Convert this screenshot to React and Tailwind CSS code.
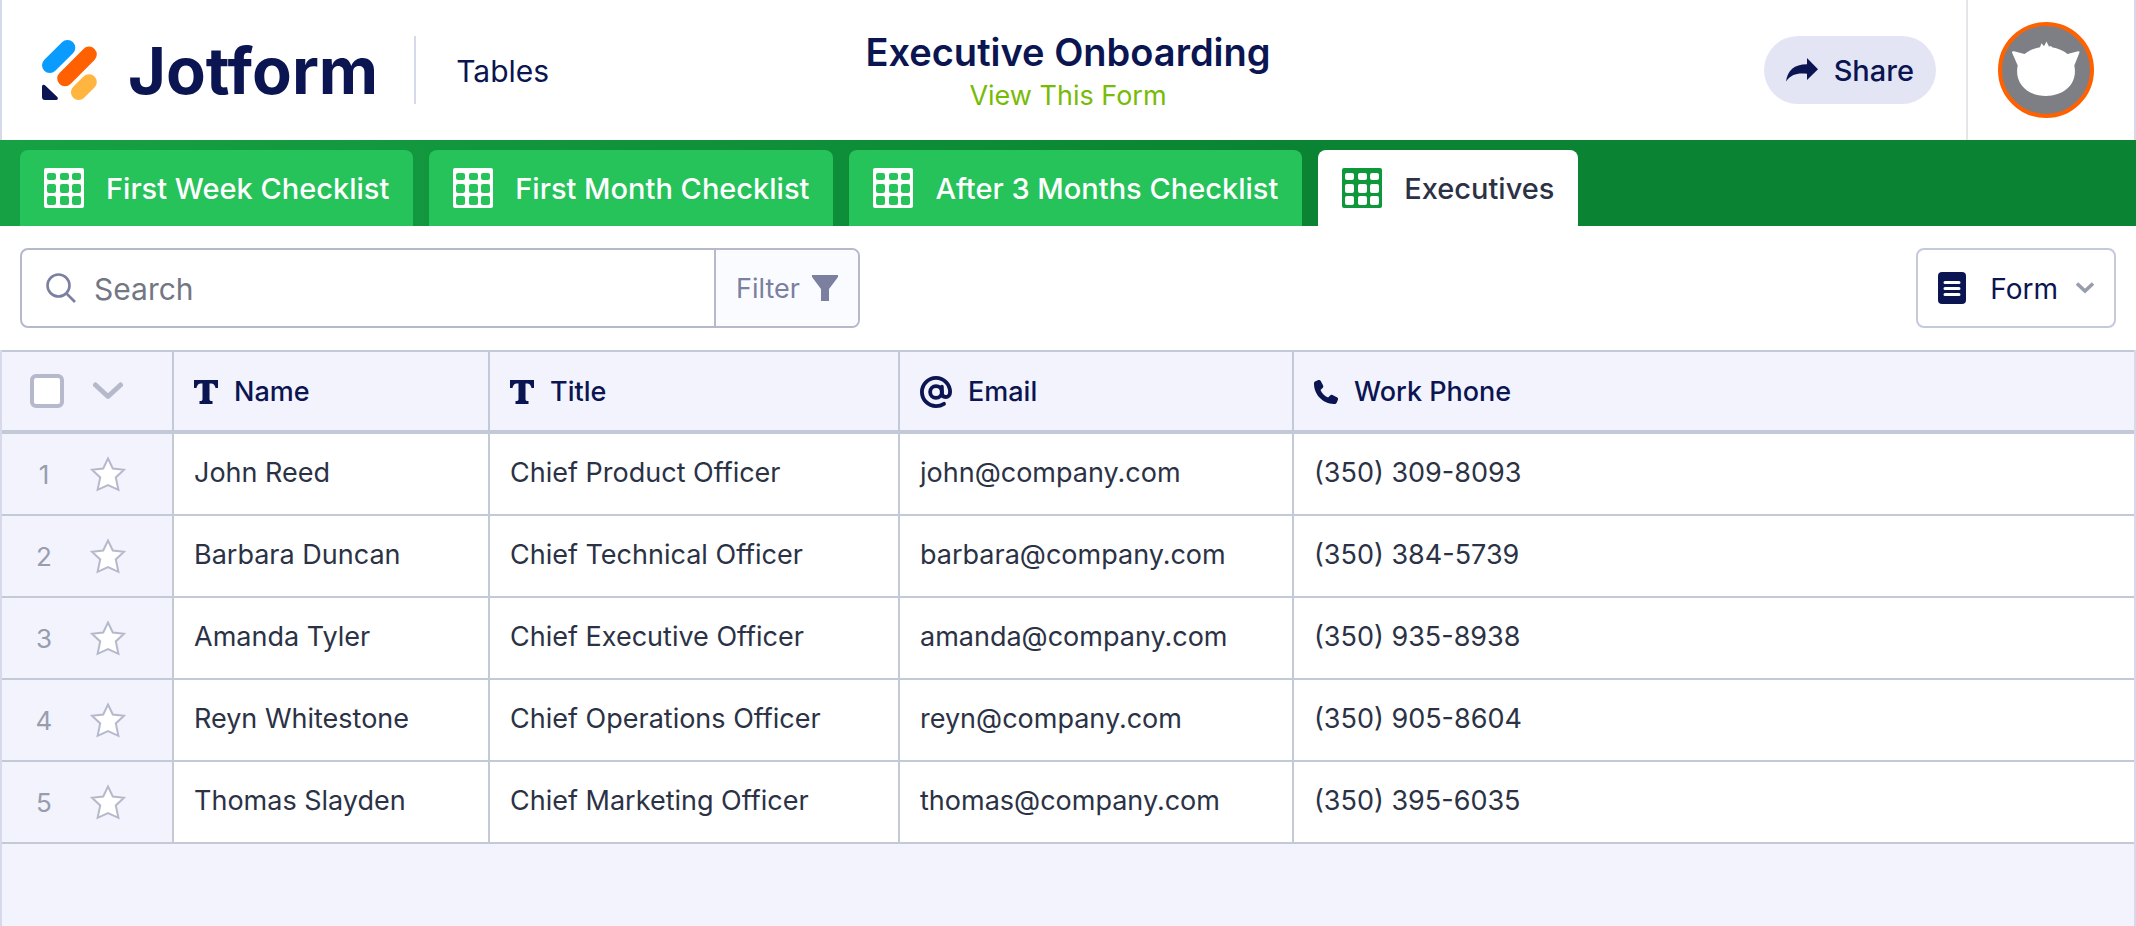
const tabs = ["First Week Checklist", "First Month Checklist", "After 3 Months Checklist", "Executives"];

const people = [
  ["John Reed", "Chief Product Officer", "john@company.com", "(350) 309-8093"],
  ["Barbara Duncan", "Chief Technical Officer", "barbara@company.com", "(350) 384-5739"],
  ["Amanda Tyler", "Chief Executive Officer", "amanda@company.com", "(350) 935-8938"],
  ["Reyn Whitestone", "Chief Operations Officer", "reyn@company.com", "(350) 905-8604"],
  ["Thomas Slayden", "Chief Marketing Officer", "thomas@company.com", "(350) 395-6035"],
];

function LogoMark() {
  return (
    <svg viewBox="0 0 56 60" className="h-15 w-14" aria-hidden="true">
      <g strokeLinecap="round" fill="none">
        <path d="M7.800 25.300 25.500 7.800" stroke="#0a9bff" strokeWidth="15.600" />
        <path d="M23 38.400 47 14.400" stroke="#ff6100" strokeWidth="15.600" />
        <path d="M36.700 52.200 47 42" stroke="#ffb53f" strokeWidth="15.600" />
      </g>
      <path d="M0 46.500c0-1.600 1.800-2.300 3-1.200L15.300 57c1.200 1.100.4 3-1.200 3H3a3 3 0 0 1-3-3z" fill="#0a1551" />
    </svg>
  );
}

function GridIcon() {
  return (
    <svg viewBox="0 0 40 40" className="size-10 shrink-0" fill="currentColor" aria-hidden="true">
      <path
        fillRule="evenodd"
        d="M2 0h36a2 2 0 0 1 2 2v36a2 2 0 0 1-2 2H2a2 2 0 0 1-2-2V2a2 2 0 0 1 2-2z
        M5 5a2 2 0 0 0-2 2v3a2 2 0 0 0 2 2h5a2 2 0 0 0 2-2V7a2 2 0 0 0-2-2z M18 5a2 2 0 0 0-2 2v3a2 2 0 0 0 2 2h5a2 2 0 0 0 2-2V7a2 2 0 0 0-2-2z M30 5a2 2 0 0 0-2 2v3a2 2 0 0 0 2 2h5a2 2 0 0 0 2-2V7a2 2 0 0 0-2-2z
        M5 16a2 2 0 0 0-2 2v5a2 2 0 0 0 2 2h5a2 2 0 0 0 2-2v-5a2 2 0 0 0-2-2z M18 16a2 2 0 0 0-2 2v5a2 2 0 0 0 2 2h5a2 2 0 0 0 2-2v-5a2 2 0 0 0-2-2z M30 16a2 2 0 0 0-2 2v5a2 2 0 0 0 2 2h5a2 2 0 0 0 2-2v-5a2 2 0 0 0-2-2z
        M5 28a2 2 0 0 0-2 2v5a2 2 0 0 0 2 2h5a2 2 0 0 0 2-2v-5a2 2 0 0 0-2-2z M18 28a2 2 0 0 0-2 2v5a2 2 0 0 0 2 2h5a2 2 0 0 0 2-2v-5a2 2 0 0 0-2-2z M30 28a2 2 0 0 0-2 2v5a2 2 0 0 0 2 2h5a2 2 0 0 0 2-2v-5a2 2 0 0 0-2-2z"
      />
    </svg>
  );
}

function ShareIcon() {
  return (
    <svg viewBox="0 0 32 24" className="h-6 w-8 shrink-0" fill="currentColor" aria-hidden="true">
      <path d="M0 23.500C1.500 12.500 8 6.300 21 6.200V0l11 11.200L21 22v-6.200c-9.500-1.200-16 .7-21 7.700z" />
    </svg>
  );
}

function TextIcon() {
  return (
    <svg viewBox="0 0 24 24" className="size-6 shrink-0" fill="currentColor" aria-hidden="true">
      <path d="M0 0h24v8h-2.500C20.700 4.700 19.500 3.500 16.500 3.500H15.500v15.500c0 1.700.8 2 3 2v3h-13v-3c2.200 0 3-.3 3-2V3.500h-1C4.500 3.500 3.300 4.700 2.500 8H0z" />
    </svg>
  );
}

function AtIcon() {
  return (
    <svg viewBox="0 0 30 30" className="size-8 shrink-0" fill="none" stroke="currentColor" strokeWidth="3.600" strokeLinecap="round" aria-hidden="true">
      <circle cx="15" cy="15" r="5.500" />
      <path d="M20.500 10v6.200c0 2.200 1.500 3.500 3.600 3.500 2.300 0 4.100-1.700 4.100-4.700A13.200 13.200 0 1 0 15 28.200c3 0 5.300-.7 7.500-2.100" />
    </svg>
  );
}

function PhoneIcon() {
  return (
    <svg viewBox="0 0 24 24" className="size-6 shrink-0" fill="currentColor" aria-hidden="true">
      <path d="M1.600 1.200 4.300.1c1-.4 2 0 2.500 1l2.300 4.500c.4.900.2 1.800-.5 2.400L6.500 9.900c1.600 3.500 4 6 7.600 7.700l2-2.200c.6-.7 1.500-.9 2.400-.5l4.400 2.300c1 .5 1.400 1.500 1 2.500l-1.100 2.700c-.4.9-1.100 1.500-2.100 1.500C9.500 24.500-.3 14.700 0 3.300c0-1 .6-1.700 1.600-2.100z" />
    </svg>
  );
}

function StarIcon() {
  return (
    <svg viewBox="0 0 36 36" className="size-9" fill="#fff" stroke="#b5b9cb" strokeWidth="2" aria-hidden="true">
      <path d="m18 2.500 4.800 10 11.200 1.300-8.200 7.600 2.600 12.500L18 29.200l-10.400 4.700 2.600-12.500L2 13.800l11.200-1.300z" />
    </svg>
  );
}

const columns = [
  { label: "Name", Icon: TextIcon, width: "w-[316px]" },
  { label: "Title", Icon: TextIcon, width: "w-[410px]" },
  { label: "Email", Icon: AtIcon, width: "w-[394px]" },
  { label: "Work Phone", Icon: PhoneIcon, width: "" },
];

function Header() {
  return (
    <header className="grid h-[140px] grid-cols-[1fr_auto_1fr] items-center border-x-2 border-[#d5d9ea] bg-white text-[#0a1551]">
      <div className="flex items-center pl-10">
        <a href="#home" className="flex items-center gap-[30px]">
          <LogoMark />
          <span className="text-[65px] leading-none font-bold">Jotform</span>
        </a>
        <div className="ml-9 h-17 w-0.5 bg-[#d5d9ea]" />
        <a href="#tables" className="ml-10 pt-0.5 text-3xl">Tables</a>
      </div>
      <div className="flex flex-col items-center pt-1">
        <h1 className="text-[38px] leading-[48px] font-semibold">Executive Onboarding</h1>
        <a href="#form" className="text-[27px] leading-10 text-[#78bb07]">View This Form</a>
      </div>
      <div className="flex h-full items-center justify-end">
        <button className="mr-[30px] flex h-17 items-center gap-4 rounded-full bg-[#e3e5f5] px-[22px] text-[29px] font-medium">
          <ShareIcon />
          <span className="pt-0.5">Share</span>
        </button>
        <div className="flex h-full items-center border-l-2 border-[#e3e5e8] px-[30px] pr-10">
          <button aria-label="Account" className="size-24 overflow-hidden rounded-full border-4 border-[#ff6100] bg-[#7e7f84]">
            <svg viewBox="0 0 88 88" className="size-full" fill="#fff" aria-hidden="true">
              <path d="M10 26.500c0-1 1-1.500 2-1.200L22.500 28C27 24.500 32 22.200 38 21.200l1.500-4 2.500 3 2.500-4.700 2.500 5 2-.5 1 1.300C56 22.300 61 24.500 65.500 28L76 25.200c1-.2 1.800.3 1.500 1.300L72.300 39.500C76 57 63 70 44 70S12 57 15.700 39.500z" />
            </svg>
          </button>
        </div>
      </div>
    </header>
  );
}

function Tabs() {
  return (
    <nav className="flex gap-4 bg-linear-to-r from-[#16a144] to-[#0a8432] to-60% px-5 pt-2.5">
      {tabs.map((tab) => (
        <button
          key={tab}
          aria-current={tab === "Executives" ? "page" : undefined}
          className="group flex h-19 items-center gap-[22px] rounded-t-lg bg-[#26c25a] px-6 text-[29px] font-medium whitespace-nowrap text-white aria-[current=page]:bg-white"
        >
          <span className="group-aria-[current=page]:text-[#0f973c]">
            <GridIcon />
          </span>
          <span className="pt-0.5 group-aria-[current=page]:text-[#2b3245]">{tab}</span>
        </button>
      ))}
    </nav>
  );
}

function Toolbar() {
  return (
    <div className="flex justify-between px-5 py-[22px]">
      <div className="flex h-20 w-[840px] overflow-hidden rounded-lg border-2 border-[#b5b9cb]">
        <label className="flex min-w-0 flex-1 items-center gap-[18px] pl-6">
          <svg viewBox="0 0 30 30" className="size-[30px] shrink-0" fill="none" stroke="#7b80a0" strokeWidth="2.600" aria-hidden="true">
            <circle cx="12.500" cy="12.500" r="11" />
            <path d="m20.500 20.500 8.500 8.500" />
          </svg>
          <input type="text" aria-label="Search" placeholder="Search" className="min-w-0 flex-1 pt-0.5 text-3xl outline-none placeholder:text-[#737784]" />
        </label>
        <button className="flex items-center gap-3 border-l-2 border-[#b5b9cb] bg-[#fafbfe] px-5 text-[27px] text-[#7b80a0]">
          <span className="pt-0.5">Filter</span>
          <svg viewBox="0 0 26 26" className="size-[26px]" fill="currentColor" aria-hidden="true">
            <path d="M0 0h26v2l-9 12v12H9V14L0 2z" />
          </svg>
        </button>
      </div>
      <button className="flex h-20 items-center rounded-lg border-2 border-[#c5c9dc] px-5 text-[28px] text-[#0a1551]">
        <svg viewBox="0 0 28 32" className="h-8 w-7" aria-hidden="true">
          <rect width="28" height="32" rx="4" fill="#0a1551" />
          <path d="M7 10.500h14M7 16.500h14M7 22.500h14" stroke="#fff" strokeWidth="3" strokeLinecap="round" />
        </svg>
        <span className="mr-[18px] ml-6 pt-0.5">Form</span>
        <svg viewBox="0 0 18 12" className="h-3 w-[18px]" fill="none" stroke="#979dad" strokeWidth="3.500" aria-hidden="true">
          <path d="m1 1.500 8 7.500 8-7.500" />
        </svg>
      </button>
    </div>
  );
}

function Table() {
  return (
    <table className="w-full table-fixed border-separate border-spacing-0 text-[27px] text-[#2b3245]">
      <thead className="text-[#0a1551]">
        <tr className="h-21">
          <th className="w-[172px] border-t-2 border-r-2 border-b-4 border-[#c4c9d8] p-0 pl-7">
            <div className="flex items-center gap-7">
              <input type="checkbox" aria-label="Select all rows" className="size-[34px] appearance-none rounded-md border-4 border-[#b5b9cb] bg-white" />
              <button aria-label="Selection options">
                <svg viewBox="0 0 32 18" className="h-[18px] w-8" fill="none" stroke="#b5b9cb" strokeWidth="5" strokeLinecap="round" strokeLinejoin="round" aria-hidden="true">
                  <path d="m3.500 3 12.500 11.500L28.500 3" />
                </svg>
              </button>
            </div>
          </th>
          {columns.map(({ label, Icon, width }) => (
            <th key={label} className={`${width} border-t-2 border-b-4 border-[#c4c9d8] p-0 px-5 pt-0.5 text-left font-medium not-last:border-r-2`}>
              <div className="flex items-center gap-4">
                <Icon />
                {label}
              </div>
            </th>
          ))}
        </tr>
      </thead>
      <tbody>
        {people.map((person, i) => (
          <tr key={person[0]} className="h-[82px]">
            <th className="border-r-2 border-b-2 border-[#c4c9d8] p-0 font-normal">
              <div className="flex items-center text-[26px] text-[#979dad]">
                <span className="w-21 text-center">{i + 1}</span>
                <button aria-label={`Star ${person[0]}`} className="ml-1">
                  <StarIcon />
                </button>
              </div>
            </th>
            {person.map((value) => (
              <td key={value} className="border-b-2 border-[#c4c9d8] bg-white px-5 pt-0 pb-0.5 whitespace-nowrap not-last:border-r-2">
                {value}
              </td>
            ))}
          </tr>
        ))}
      </tbody>
    </table>
  );
}

export default function App() {
  return (
    <div className="flex min-h-screen flex-col bg-white font-['Inter',sans-serif]">
      <Header />
      <Tabs />
      <Toolbar />
      <main className="flex-1 border-x-2 border-[#d5d9ea] bg-[#f3f3fd]">
        <Table />
      </main>
    </div>
  );
}
